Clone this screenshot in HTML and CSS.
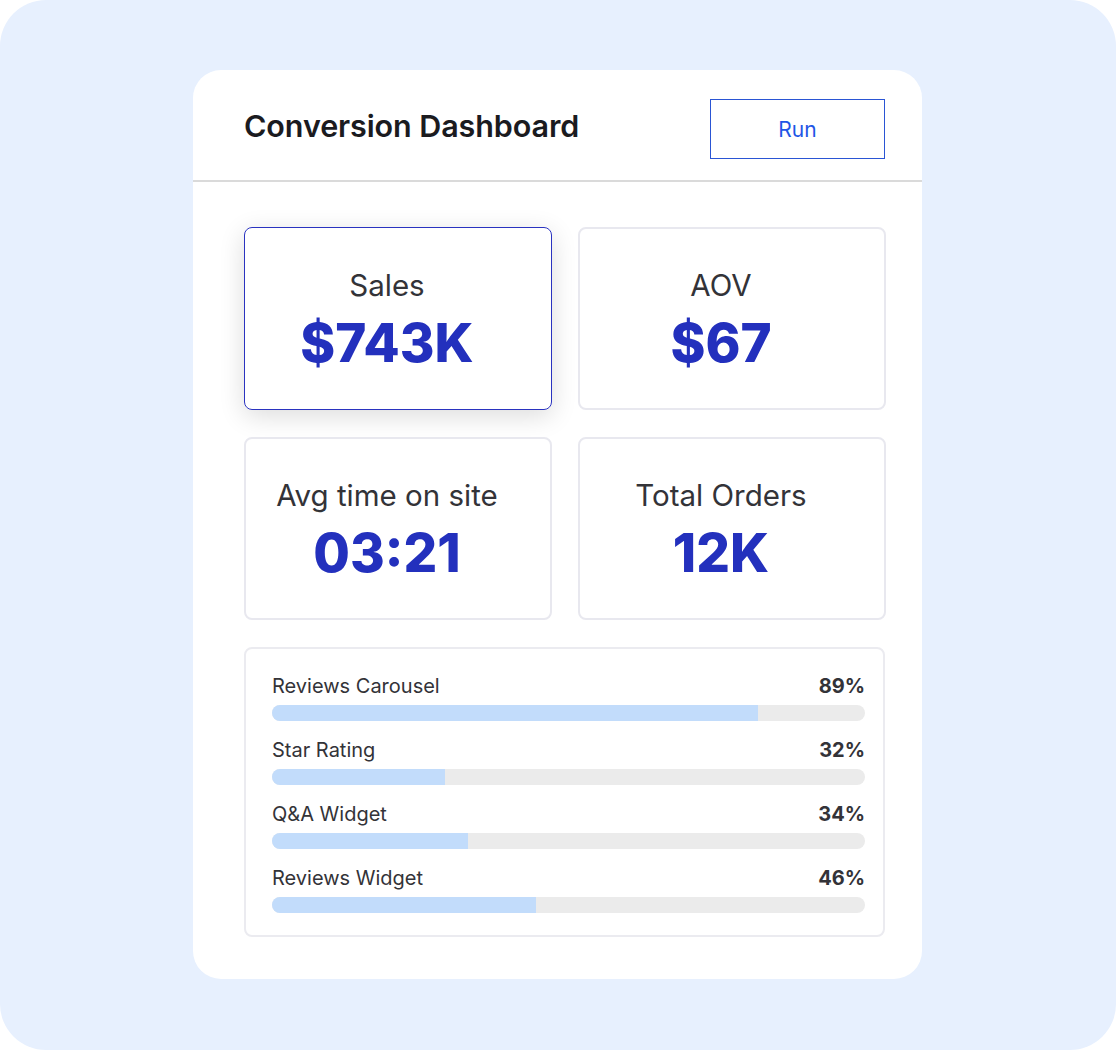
FILE: index.html
```html
<!DOCTYPE html>
<html>
<head>
<meta charset="utf-8">
<link rel="stylesheet" href="styles.css">
</head>
<body>
<div class="frame">
  <div class="card">
    <div class="header">
      <h1 class="title">Conversion Dashboard</h1>
      <button class="run">Run</button>
    </div>
    <div class="body">
      <div class="stats">
        <div class="stat active">
          <div class="label">Sales</div>
          <div class="value">$743K</div>
        </div>
        <div class="stat">
          <div class="label">AOV</div>
          <div class="value">$67</div>
        </div>
        <div class="stat">
          <div class="label">Avg time on site</div>
          <div class="value">03:21</div>
        </div>
        <div class="stat">
          <div class="label">Total Orders</div>
          <div class="value">12K</div>
        </div>
      </div>
      <div class="panel">
        <div class="row">
          <div class="row-head"><span class="name">Reviews Carousel</span><span class="pct">89%</span></div>
          <div class="track"><div class="fill" style="width:82%"></div></div>
        </div>
        <div class="row">
          <div class="row-head"><span class="name">Star Rating</span><span class="pct">32%</span></div>
          <div class="track"><div class="fill" style="width:29.2%"></div></div>
        </div>
        <div class="row">
          <div class="row-head"><span class="name">Q&amp;A Widget</span><span class="pct">34%</span></div>
          <div class="track"><div class="fill" style="width:33%"></div></div>
        </div>
        <div class="row">
          <div class="row-head"><span class="name">Reviews Widget</span><span class="pct">46%</span></div>
          <div class="track"><div class="fill" style="width:44.6%"></div></div>
        </div>
      </div>
    </div>
  </div>
</div>
</body>
</html>
```

FILE: styles.css
```css
* { box-sizing: border-box; }
html, body { margin: 0; padding: 0; background: #ffffff; }
body { font-family: Inter, "Noto Sans", sans-serif; }

.frame {
  width: 1116px;
  height: 1050px;
  background: #e7f0fe;
  border-radius: 46px;
  padding: 70px 0 0 193px;
}

.card {
  width: 729px;
  height: 909px;
  background: #ffffff;
  border-radius: 28px;
  display: flex;
  flex-direction: column;
}

.header {
  height: 112px;
  border-bottom: 2px solid #dadada;
  display: flex;
  align-items: center;
  justify-content: space-between;
  padding: 0 37px 0 51px;
}

.title {
  margin: 0;
  font-size: 30.5px;
  font-weight: 600;
  color: #1b1b1f;
  letter-spacing: -0.1px;
  padding-top: 1px;
}

.run {
  width: 175px;
  height: 60px;
  margin-top: 7px;
  background: #ffffff;
  border: 1.5px solid #2a55d4;
  border-radius: 0;
  color: #1f56e6;
  font-family: Inter, "Noto Sans", sans-serif;
  font-size: 21px;
  font-weight: 400;
  padding-top: 2px;
}

.body {
  padding: 45px 37px 0 51px;
  display: flex;
  flex-direction: column;
  gap: 27px;
}

.stats {
  display: grid;
  grid-template-columns: 308px 308px;
  column-gap: 26px;
  row-gap: 27px;
}

.stat {
  height: 183px;
  border: 2px solid #e8e8ef;
  border-radius: 8px;
  display: flex;
  flex-direction: column;
  align-items: center;
  justify-content: center;
  padding-right: 22px;
  padding-top: 5px;
}

.stat.active {
  border: 1.5px solid #2a33c0;
  box-shadow: 0 6px 26px rgba(0, 0, 0, 0.14);
}

.label {
  font-size: 29.5px;
  color: #333338;
  line-height: 34px;
}

.value {
  font-size: 53px;
  font-weight: 800;
  color: #2330bd;
  line-height: 64px;
  margin-top: 9px;
}

.panel {
  border: 2px solid #ebebf0;
  border-radius: 8px;
  padding: 26px 18px 22px 26px;
  display: flex;
  flex-direction: column;
  gap: 18px;
}

.row {
  display: flex;
  flex-direction: column;
  gap: 8px;
}

.row-head {
  display: flex;
  justify-content: space-between;
  font-size: 20px;
  line-height: 22px;
  color: #333338;
}

.pct { font-weight: 700; }

.track {
  height: 16px;
  background: #ebebeb;
  border-radius: 8px;
  overflow: hidden;
}

.fill {
  height: 100%;
  background: #c2dcfb;
}
```
